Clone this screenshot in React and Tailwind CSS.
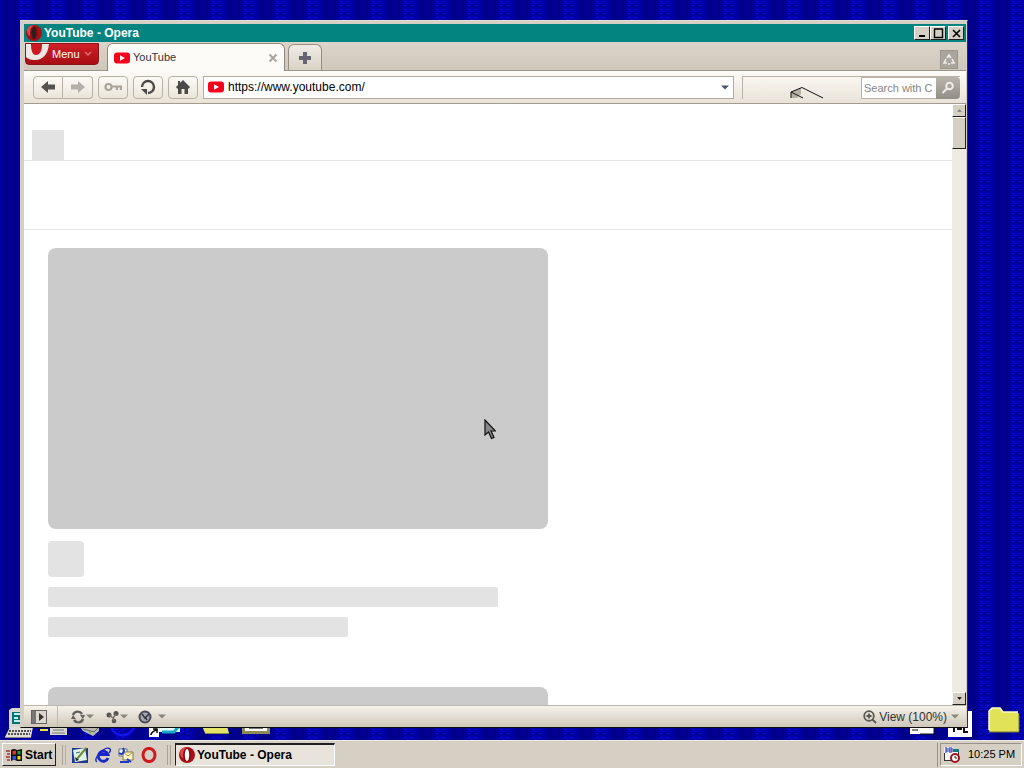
import React from 'react';

const OperaIcon = ({ className }) => (
  <svg viewBox="0 0 16 16" className={className}>
    <circle cx="8" cy="8" r="8" fill="#a81018" />
    <ellipse cx="6" cy="6" rx="5" ry="5.5" fill="#e04848" />
    <ellipse cx="8" cy="8" rx="4" ry="7" fill="#8c0c12" />
    <ellipse cx="8" cy="8" rx="2.2" ry="6" fill="currentColor" />
  </svg>
);

const YouTubeIcon = () => (
  <svg viewBox="0 0 16 12" className="w-4 h-3 shrink-0">
    <rect y="0.5" width="16" height="11" rx="3" fill="#f8001c" />
    <path d="M6 3.2L11 6L6 8.8Z" fill="#fff" />
  </svg>
);

const Caret = ({ className }) => (
  <svg viewBox="0 0 8 5" className={className}>
    <path d="M0 0.5H8L4 4.5Z" fill="currentColor" />
  </svg>
);

const Wallpaper = () => (
  <svg className="absolute inset-0 w-full h-full">
    <defs>
      <pattern id="weave" width="32" height="8" patternUnits="userSpaceOnUse">
        <rect width="32" height="8" fill="#00008c" />
        <rect x="0" width="3" height="8" fill="#0000a0" />
        <rect x="18" width="14" height="8" fill="#0000a4" />
        <path d="M20 1.5H23M26 1.5H29M22 3.5H24M25 3.5H27M20 5.5H22M27 5.5H30" stroke="#0b0bdc" />
        <path d="M19 7.5H31" stroke="#000098" />
      </pattern>
    </defs>
    <rect width="100%" height="100%" fill="url(#weave)" />
  </svg>
);

const DesktopIcons = () => (
  <>
    {/* Computer */}
    <svg viewBox="0 0 32 32" className="absolute left-1 bottom-0 w-8 h-8">
      <path d="M5 2L8 0H30V20H5Z" fill="#d8d8d0" />
      <rect x="8" y="4" width="16" height="12" fill="#087070" />
      <path d="M10 6H17M10 10H14M10 13H16" stroke="#b8f0f0" strokeWidth="2" />
      <path d="M6 19H29L27 29H1Z" fill="#e0e0d8" />
      <path d="M5 23H27M4 26H26" stroke="#555" strokeWidth="2" strokeDasharray="2 1" />
      <path d="M1 29.5H27" stroke="#888" />
    </svg>
    {/* Network and printer */}
    <svg viewBox="0 0 64 14" className="absolute left-10 bottom-0 w-16 h-3.5">
      <path d="M0 4H8" stroke="#e8e840" strokeWidth="2" />
      <path d="M10 1H27V9H10Z" fill="#d8d8d0" />
      <path d="M13 4H24M12 7H25" stroke="#777" />
      <path d="M40 1L59 0V5L53 10L43 5Z" fill="#b8b8b0" />
      <path d="M43 3L54 6L58 2" stroke="#666" fill="none" />
      <circle cx="50" cy="6" r="1" fill="#50b050" />
    </svg>
    {/* Browser shortcut */}
    <svg viewBox="0 0 80 14" className="absolute left-[108px] bottom-0 w-20 h-3.5">
      <path d="M3 0C6 12 22 12 26 1" stroke="#1010e8" strokeWidth="3" fill="none" />
      <path d="M52 0H72V6H50Z" fill="#e8ffff" />
      <path d="M54 6H66L71 0" stroke="#18a8c8" strokeWidth="3" fill="none" />
      <rect x="41" y="1" width="10" height="10" fill="#fff" />
      <path d="M43 9C43 6 46 5 48 4M45 3H49V7" stroke="#000" strokeWidth="1.5" fill="none" />
    </svg>
    {/* Folder and document */}
    <svg viewBox="0 0 70 14" className="absolute left-[202px] bottom-0 w-[70px] h-3.5">
      <path d="M0 0H25L27 7H3Z" fill="#e4e468" />
      <path d="M3 7.5H27" stroke="#888840" />
      <rect x="40" y="0" width="28" height="8" fill="#8c8c58" />
      <rect x="43" y="0" width="22" height="5" fill="#fff" />
      <path d="M47 2.5H61" stroke="#777" />
    </svg>
    <svg viewBox="0 0 66 50" className="absolute right-[50px] bottom-0 w-[66px] h-[50px]">
      <rect x="2" y="36" width="24" height="8" fill="#fff" />
      <path d="M4 40H10M26 37V44H12" stroke="#111" fill="none" />
      <rect x="40" y="21" width="24" height="26" fill="#fff" />
      <path d="M46 38V42M49 39H54M56 37V42H60" stroke="#111" strokeWidth="2" fill="none" />
    </svg>
    <svg viewBox="0 0 32 28" className="absolute right-1 bottom-1.5 w-8 h-7">
      <path d="M1 25V5L4 2H12L15 6H29L31 8V26H2Z" fill="#e2e258" />
      <path d="M1 24V5L4 2H12L15 6H30" stroke="#fbfbc8" fill="none" strokeWidth="1.5" />
      <path d="M1 26H31V8" stroke="#777730" fill="none" />
    </svg>
  </>
);

const BEVEL = 'bg-[#d6cfc4] border border-t-white border-l-white border-r-[#202020] border-b-[#202020]';
const TOOL = 'w-[30px] h-[23px] flex items-center justify-center rounded border border-[#b8b2a6] bg-linear-to-b from-[#fcfaf6] to-[#ebe6da]';

const TitleBar = () => (
  <div className="h-[18px] flex items-center bg-[#048480] text-white">
    <OperaIcon className="w-4 h-4 ml-0.5 mr-0.5 text-[#222]" />
    <h1 className="flex-1 text-[12px] leading-4 font-bold">YouTube - Opera</h1>
    <button aria-label="Minimize" className={`${BEVEL} w-4 h-3.5`}>
      <svg viewBox="0 0 14 12" className="w-full h-full"><path d="M4 9H10" stroke="#000" strokeWidth="2" /></svg>
    </button>
    <button aria-label="Maximize" className={`${BEVEL} w-4 h-3.5`}>
      <svg viewBox="0 0 14 12" className="w-full h-full"><path d="M3.5 2V10.5H11.5V2M3 2H12" stroke="#000" strokeWidth="1.4" fill="none" /></svg>
    </button>
    <button aria-label="Close" className={`${BEVEL} w-4 h-3.5 ml-0.5 mr-0.5`}>
      <svg viewBox="0 0 14 12" className="w-full h-full"><path d="M4 3L11 10M11 3L4 10" stroke="#000" strokeWidth="1.6" /></svg>
    </button>
  </div>
);

const TabBar = () => (
  <div className="h-[29px] flex items-end bg-linear-to-b from-[#dcd5ca] to-[#cfc7ba] border-b border-[#9c958a] text-[11px]">
    <button className="self-start ml-px mt-px w-[74px] h-[22px] flex items-center text-white bg-linear-to-b from-[#d02028] to-[#a80c14] border border-[#8c1418] rounded-b-sm">
      <svg viewBox="0 0 24 20" className="w-6 h-5">
        <path d="M0 0H23C22 10 17 16 9 16C4 16 2 15 0 13Z" fill="#eee8e4" />
        <path d="M5 0H16C16 7 14 11 10 11C6 11 5 6 5 0Z" fill="#cc1820" />
      </svg>
      <span className="ml-0.5">Menu</span>
      <svg viewBox="0 0 8 6" className="w-2 h-1.5 ml-1"><path d="M1 1L4 4L7 1" stroke="#d87078" fill="none" strokeWidth="1.5" /></svg>
    </button>
    <div className="ml-2 -mb-px w-[178px] h-[28px] flex items-center px-1.5 rounded-t-md border border-b-0 border-[#8f887c] bg-[#fdfbf8]">
      <YouTubeIcon />
      <span className="ml-[3px] flex-1 text-[#333]">YouTube</span>
      <button aria-label="Close tab">
        <svg viewBox="0 0 10 10" className="w-2.5 h-2.5"><path d="M1.5 1.5L8.5 8.5M8.5 1.5L1.5 8.5" stroke="#aaa49c" strokeWidth="2" /></svg>
      </button>
    </div>
    <button aria-label="New tab" className="ml-[3px] w-[34px] h-[26px] flex items-center justify-center rounded-t-md border border-b-0 border-[#968f84] bg-linear-to-b from-[#f0ece4] to-[#d9d2c7]">
      <svg viewBox="0 0 12 12" className="w-3 h-3"><path d="M6 0V12M0 6H12" stroke="#646474" strokeWidth="4" /></svg>
    </button>
    <button aria-label="Closed tabs" className="ml-auto mr-2 mb-px w-[18px] h-[19px] flex items-center justify-center border border-[#9b978f] bg-[#aaa69e]">
      <svg viewBox="0 0 12 12" className="w-3 h-3" fill="none" stroke="#f0eeea" strokeWidth="1.6">
        <path d="M4 4L6 1L8 4M9 5L11 9H8M3 5L1 9H4M5 10H7" />
      </svg>
    </button>
  </div>
);

const AddressBar = () => (
  <div className="h-[33px] flex items-center pl-[9px] pr-1.5 bg-linear-to-b from-[#fdfbf8] to-[#e9e3d7] border-b border-[#a29c90]">
    <button aria-label="Back" className={`${TOOL} rounded-r-none`}>
      <svg viewBox="0 0 16 14" className="w-4 h-3.5"><path d="M1 7L8 1V4.5H15V9.5H8V13Z" fill="#55534f" /></svg>
    </button>
    <button aria-label="Forward" className={`${TOOL} rounded-l-none border-l-0`}>
      <svg viewBox="0 0 16 14" className="w-4 h-3.5"><path d="M15 7L8 1V4.5H1V9.5H8V13Z" fill="#b4afa8" /></svg>
    </button>
    <button aria-label="Wand" className={`${TOOL} ml-[5px]`}>
      <svg viewBox="0 0 18 10" className="w-[18px] h-2.5" fill="none" stroke="#aaa59c" strokeWidth="2.2">
        <circle cx="4.5" cy="5" r="3" /><path d="M8 4.5H17V8M13 5V8" />
      </svg>
    </button>
    <button aria-label="Reload" className={`${TOOL} ml-[5px]`}>
      <svg viewBox="0 0 16 16" className="w-4 h-4" fill="none" stroke="#4c4a47" strokeWidth="2.4">
        <path d="M2 8A6 6 0 1 1 8 14" /><path d="M1 10H7V16" fill="#4c4a47" stroke="none" />
      </svg>
    </button>
    <button aria-label="Home" className={`${TOOL} ml-[5px]`}>
      <svg viewBox="0 0 16 16" className="w-4 h-4"><path d="M8 1L15 8L14 9.5H13V15H9.5V10H6.5V15H3V9.5H2L1 8L3 6V2H5V4Z" fill="#4c4a47" /></svg>
    </button>
    <div className="ml-[5px] flex-1 h-[23px] flex items-center px-1 bg-white border border-[#b1aba0]">
      <YouTubeIcon />
      <input aria-label="Address" defaultValue="https://www.youtube.com/" className="ml-1 flex-1 min-w-0 text-[12px] leading-4 text-black outline-none" />
      <Caret className="w-2 h-[5px] text-[#4d5270]" />
    </div>
    <div className="ml-2 w-[218px] h-[23px] flex border border-r-0 border-b-0 border-[#bbb3aa]">
      <div className="flex-1 flex items-end justify-center">
        <svg viewBox="0 0 34 12" className="w-[34px] h-3 ml-2.5">
          <path d="M1 5L11 1V7L7 11H1Z" fill="#b4b1a3" />
          <path d="M1 11V5L12 0.5L33 11M1 5L13 11" stroke="#111" fill="none" />
        </svg>
      </div>
      <input aria-label="Search" placeholder="Search with C" className="w-[75px] px-0.5 text-[11px] leading-4 bg-white border border-r-0 border-[#b9b2a8] placeholder:text-[#88857f] outline-none" />
      <button aria-label="Search" className="w-6 flex items-center justify-center bg-linear-to-b from-[#b9b4ac] to-[#928d85] rounded-r-sm">
        <svg viewBox="0 0 14 14" className="w-3.5 h-3.5" fill="none" stroke="#f0ede7" strokeWidth="2"><circle cx="8.5" cy="5" r="3.3" /><path d="M6 7.5L1.5 12" /></svg>
      </button>
    </div>
  </div>
);

const VideoSkeleton = () => (
  <div className="mb-[50px]">
    <div className="max-w-[500px] h-[281px] rounded-lg bg-[#cbcbcb]"></div>
    <div className="mt-3 w-9 h-9 rounded bg-[#e3e3e3]"></div>
    <div className="mt-2.5 max-w-[450px] h-5 rounded-xs bg-[#e3e3e3]"></div>
    <div className="mt-2.5 max-w-[300px] h-5 rounded-xs bg-[#e3e3e3]"></div>
  </div>
);

const Page = () => (
  <div className="flex-1 min-h-0 flex bg-white">
    <main className="flex-1 overflow-hidden">
      <div className="h-[57px] flex items-end pl-2 border-b border-[#e4e4e4]">
        <div className="w-8 h-[30px] bg-[#e3e3e3]"></div>
      </div>
      <div className="h-[69px] border-b border-[#e4e4e4]"></div>
      <div className="pt-[18px] px-6">
        {[1, 2].map((index) => (
          <VideoSkeleton key={index} />
        ))}
      </div>
    </main>

    {/* Scrollbar */}
    <div className="w-3.5 flex flex-col bg-[#eeebe3]">
      <button aria-label="Scroll up" className={`${BEVEL} h-[13px] flex items-center justify-center`}>
        <Caret className="w-[5px] h-[3px] rotate-180 text-[#777]" />
      </button>
      <div className={`${BEVEL} h-8`}></div>
      <button aria-label="Scroll down" className={`${BEVEL} mt-auto h-[13px] flex items-center justify-center`}>
        <Caret className="w-[5px] h-[3px] text-black" />
      </button>
    </div>
  </div>
);

const StatusBar = () => (
  <div className="h-[22px] flex items-center px-[7px] bg-linear-to-b from-[#f6f3ea] to-[#cfc7ba] border-t border-[#bdb7ac] text-[#333]">
    <button aria-label="Panels">
      <svg viewBox="0 0 16 14" className="w-4 h-3.5">
        <rect x="0.5" y="0.5" width="15" height="13" fill="#ddd8ce" stroke="#66635e" />
        <rect x="1" y="1" width="4" height="12" fill="#777" />
        <path d="M8 3L13 7L8 11Z" fill="#333" />
      </svg>
    </button>
    <div className="ml-2.5 w-px h-full bg-[#c3bcb0]"></div>
    <button aria-label="Sync" className="ml-3 flex items-center">
      <svg viewBox="0 0 16 14" className="w-4 h-3.5" fill="none" stroke="#62605c" strokeWidth="2.4">
        <path d="M3 5A5 5 0 0 1 12 4M13 9A5 5 0 0 1 4 10" />
        <path d="M10 5H15L13 9ZM1 9H6L3 5Z" fill="#62605c" stroke="none" />
      </svg>
      <Caret className="w-2 h-[5px] text-[#8a867e]" />
    </button>
    <button aria-label="Unite" className="ml-3 flex items-center">
      <svg viewBox="0 0 14 14" className="w-3.5 h-3.5" fill="#55534f">
        <circle cx="3" cy="5" r="2.5" /><circle cx="10" cy="3.5" r="2.5" /><circle cx="8" cy="11" r="2.3" />
        <path d="M3 5L7 8L10 4M7 7L8 11" stroke="#77746e" fill="none" strokeWidth="1.5" />
      </svg>
      <Caret className="w-2 h-[5px] text-[#8a867e]" />
    </button>
    <button aria-label="Turbo" className="ml-2.5 flex items-center gap-1.5">
      <svg viewBox="0 0 14 14" className="w-3.5 h-3.5">
        <circle cx="7" cy="7" r="5.5" fill="#a5a6b0" stroke="#484954" strokeWidth="2" />
        <path d="M4 4L7 8L11 4M7 7L9 10" stroke="#353640" strokeWidth="1.5" fill="none" />
      </svg>
      <Caret className="w-2 h-[5px] text-[#8a867e]" />
    </button>
    <button className="ml-auto flex items-center text-[12px] leading-4">
      <svg viewBox="0 0 14 14" className="w-3.5 h-3.5 mr-0.5" fill="none" stroke="#5a5854" strokeWidth="1.8">
        <circle cx="6" cy="6" r="4.8" /><path d="M9.5 9.5L13 13M3.5 6H8.5M6 3.5V8.5" />
      </svg>
      View (100%)
      <Caret className="w-2 h-[5px] ml-1 text-[#8a867e]" />
    </button>
  </div>
);

const Taskbar = () => (
  <footer className="relative h-7 flex items-center px-0.5 bg-[#d6cfc4] border-t border-[#eeeae2] text-black">
    <button className={`${BEVEL} w-[54px] h-[23px] flex items-center pl-[3px] text-[12px] font-bold`}>
      <svg viewBox="0 0 17 14" className="w-[17px] h-3.5 mr-0.5">
        <path d="M0 3H4M1 6H4M0 9H4M1 12H4" stroke="#a83038" strokeWidth="1.5" />
        <path d="M5 2Q8 0 11 2L16 1V13L11 13Q8 11 5 13Z" fill="#111" />
        <path d="M6.5 3L10 2.5V6.5H6.5Z" fill="#e03030" />
        <path d="M11.5 3H14.5V6.5H11.5Z" fill="#20a030" />
        <path d="M6.5 8H10V11.5L6.5 12Z" fill="#3050e0" />
        <path d="M11.5 8H14.5V11.5H11.5Z" fill="#e8d820" />
      </svg>
      Start
    </button>
    <div className="ml-1.5 mr-1.5 w-1 h-5 border-l border-r border-l-[#aaa296] border-r-[#c5a89c]"></div>
    <nav className="flex items-center gap-[7px]">
      <button aria-label="Show desktop">
        <svg viewBox="0 0 16 16" className="w-4 h-4">
          <rect x="0" y="1" width="16" height="15" fill="#223890" />
          <path d="M1 3L13 1L15 13L3 15Z" fill="#dff3e8" />
          <path d="M5 12L14 1" stroke="#6f8a30" strokeWidth="2" /><path d="M3 10L7 13L4 14Z" fill="#222" />
          <path d="M4 6L8 5" stroke="#2a7080" />
        </svg>
      </button>
      <button aria-label="Internet Explorer">
        <svg viewBox="0 0 16 16" className="w-4 h-4" fill="none" stroke="#1826c8">
          <path d="M13 11A5 5 0 1 1 13 7.5H4" strokeWidth="2.8" /><path d="M2 15C-3 12 10-2 15 2Q16 4 14 6" strokeWidth="1.4" />
        </svg>
      </button>
      <button aria-label="Outlook Express">
        <svg viewBox="0 0 16 16" className="w-4 h-4">
          <path d="M1 2H9V9H1Z" fill="#f8f8e8" stroke="#60708c" /><path d="M5 5H15V13H5Z" fill="#fff6c8" stroke="#807848" />
          <path d="M5 5L10 9L15 5" stroke="#a49050" fill="none" />
          <path d="M1 6C5 9 7 4 5 1M2 15H11M9 12L13 15" stroke="#2038c8" strokeWidth="2" fill="none" />
        </svg>
      </button>
      <button aria-label="Opera">
        <svg viewBox="0 0 16 16" className="w-4 h-4"><ellipse cx="8" cy="8" rx="6" ry="6.6" fill="none" stroke="#d01820" strokeWidth="3" /></svg>
      </button>
    </nav>
    <div className="ml-2.5 mr-1 w-1 h-5 border-l border-r border-[#aaa296]"></div>
    <button className="w-40 h-[23px] flex items-center pl-[3px] bg-[#e8e4dc] border border-t-2 border-t-[#202020] border-l-[#202020] border-r-white border-b-white text-[12px] font-bold">
      <OperaIcon className="w-4 h-4 mr-0.5 text-white" />
      YouTube - Opera
    </button>
    <div className="ml-auto w-px h-6 bg-[#99938a]"></div>
    <div className="ml-0.5 w-[82px] h-[23px] flex items-center pl-[3px] border border-t-[#99938a] border-l-[#99938a] border-r-white border-b-white text-[11px]">
      <svg viewBox="0 0 16 16" className="w-4 h-4 mr-2">
        <rect x="0.5" y="3.5" width="14" height="10" fill="#f8f8f8" stroke="#333" />
        <rect x="0" y="0" width="9" height="6" fill="#e8e8f8" />
        <path d="M1 1H3V5H1M1 3H3M5 1H8V5H5ZM5 3H8" stroke="#3038a8" fill="none" />
        <rect x="9" y="2" width="6" height="3" fill="#187878" />
        <circle cx="11" cy="11" r="4" fill="#fff" stroke="#9c1420" strokeWidth="2" />
        <path d="M11 9V11H13" stroke="#222" fill="none" />
      </svg>
      <time>10:25 PM</time>
    </div>
  </footer>
);

const App = () => {
  return (
    <div className="h-screen flex flex-col overflow-hidden bg-[#00008c] font-['Liberation_Sans',Arial,sans-serif]">
      <div className="relative flex-1">
        <Wallpaper />
        <DesktopIcons />
        <div className="absolute top-5 left-5 right-14 bottom-3 flex flex-col bg-[#d6cfc4] border border-t-[#e2ddd4] border-l-[#d6cfc4] border-r-[#303030] border-b-[#101010] pt-[3px] pl-[3px] pr-px">
          <TitleBar />
          <TabBar />
          <AddressBar />
          <Page />
          <StatusBar />
        </div>
        {/* Mouse pointer */}
        <svg viewBox="0 0 12 21" className="absolute left-[484px] top-[419px] w-3 h-[21px]">
          <path d="M1 1V16L4.5 13L7.5 19.5L10 18.5L7 12H11.5Z" fill="#85858a" stroke="#111" strokeWidth="1.2" />
        </svg>
      </div>
      <Taskbar />
    </div>
  );
};

export default App;
